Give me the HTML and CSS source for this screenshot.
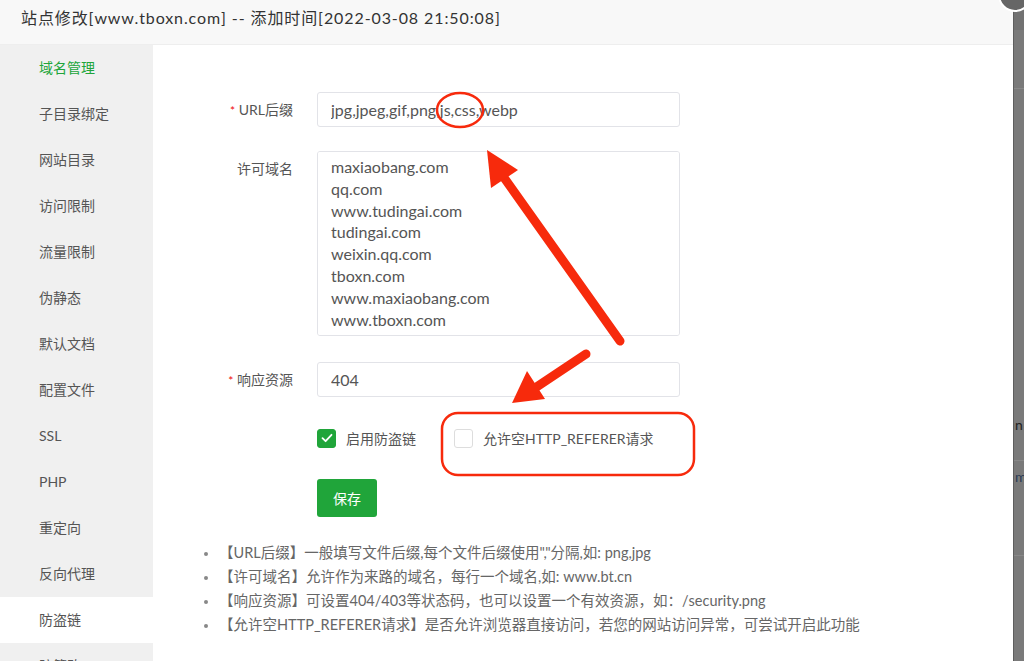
FILE: index.html
```html
<!DOCTYPE html>
<html lang="zh-CN">
<head>
  <meta charset="UTF-8" />
  <meta name="viewport" content="width=device-width, initial-scale=1" />
  <title>站点修改</title>
  <link rel="stylesheet" href="styles.css">
</head>
<body>
  <div class="page">
    <div class="modal">
      <div class="modal-title">站点修改[www.tboxn.com] -- 添加时间[2022-03-08 21:50:08]</div>

      <div class="modal-body">
        <ul class="side-menu">
          <li class="active-green">域名管理</li>
          <li>子目录绑定</li>
          <li>网站目录</li>
          <li>访问限制</li>
          <li>流量限制</li>
          <li>伪静态</li>
          <li>默认文档</li>
          <li>配置文件</li>
          <li>SSL</li>
          <li>PHP</li>
          <li>重定向</li>
          <li>反向代理</li>
          <li class="current">防盗链</li>
          <li>防篡改</li>
        </ul>

        <div class="content">
          <div class="form-row">
            <label class="form-label"><span class="req">*</span> URL后缀</label>
            <input class="form-input" type="text" value="jpg,jpeg,gif,png,js,css,webp" />
          </div>

          <div class="form-row">
            <label class="form-label">许可域名</label>
            <textarea class="form-textarea">maxiaobang.com
qq.com
www.tudingai.com
tudingai.com
weixin.qq.com
tboxn.com
www.maxiaobang.com
www.tboxn.com
tudingai.cn</textarea>
          </div>

          <div class="form-row">
            <label class="form-label"><span class="req">*</span> 响应资源</label>
            <input class="form-input" type="text" value="404" />
          </div>

          <div class="check-row">
            <span class="check-item">
              <span class="checkbox checked">
                <svg width="12" height="10" viewBox="0 0 12 10"><path d="M1.5 5.2 L4.6 8.2 L10.5 1.8" fill="none" stroke="#fff" stroke-width="1.8" stroke-linecap="round" stroke-linejoin="round"/></svg>
              </span>
              启用防盗链
            </span>
            <span class="check-item">
              <span class="checkbox"></span>
              允许空HTTP_REFERER请求
            </span>
          </div>

          <div class="btn-row">
            <button class="btn-save">保存</button>
          </div>

          <ul class="tips">
            <li>【URL后缀】一般填写文件后缀,每个文件后缀使用","分隔,如: png,jpg</li>
            <li>【许可域名】允许作为来路的域名，每行一个域名,如: www.bt.cn</li>
            <li>【响应资源】可设置404/403等状态码，也可以设置一个有效资源，如：/security.png</li>
            <li>【允许空HTTP_REFERER请求】是否允许浏览器直接访问，若您的网站访问异常，可尝试开启此功能</li>
          </ul>
        </div>
      </div>
    </div>

    <div class="backdrop">
      <div class="backdrop-bar"></div>
      <div class="backdrop-line l1"></div>
      <div class="backdrop-line l2"></div>
      <div class="backdrop-line l3"></div>
      <span class="backdrop-text t1">n</span>
      <span class="backdrop-text t2">m</span>
    </div>

    <div class="close-dot"></div>

    <!-- red marks drawn over the screenshot -->
    <svg class="marks" width="1024" height="661" viewBox="0 0 1024 661">
      <ellipse cx="460" cy="110" rx="23" ry="17" fill="none" stroke="#f72a0c" stroke-width="2.5"/>
      <line x1="620" y1="341" x2="500" y2="172" stroke="#f72a0c" stroke-width="9" stroke-linecap="round"/>
      <polygon points="487,150 518,170 491,188" fill="#f72a0c"/>
      <line x1="586" y1="354" x2="532" y2="390" stroke="#f72a0c" stroke-width="9" stroke-linecap="round"/>
      <polygon points="512,403 527,371 545,399" fill="#f72a0c"/>
      <rect x="442" y="413" width="252" height="62" rx="16" fill="none" stroke="#f72a0c" stroke-width="2.5"/>
    </svg>
  </div>
</body>
</html>
```

FILE: styles.css
```css
* {
  box-sizing: border-box;
}

html, body {
  margin: 0;
  padding: 0;
  overflow: hidden;
}

body {
  font-family: 'Lato', 'Noto Sans CJK SC', sans-serif;
  color: #555;
  background-color: #777;
}

.page {
  position: relative;
  display: flex;
  width: 1024px;
  height: 661px;
  overflow: hidden;
}

.modal {
  width: 1013px;
  height: 661px;
  display: flex;
  flex-direction: column;
  background-color: #fff;
}

.modal-title {
  height: 45px;
  padding-left: 21px;
  line-height: 35px;
  font-size: 16px;
  letter-spacing: 0.9px;
  color: #333;
  background-color: #f8f8f8;
  border-bottom: 1px solid #eee;
}

.modal-body {
  flex: 1;
  display: flex;
  min-height: 0;
}

.side-menu {
  width: 153px;
  margin: 0;
  padding: 0;
  list-style: none;
  background-color: #f0f0f0;
}

.side-menu li {
  height: 46px;
  line-height: 46px;
  padding-left: 39px;
  font-size: 14px;
  color: #555;
}

.side-menu li.active-green {
  color: #20a53a;
}

.side-menu li.current {
  background-color: #fff;
}

.content {
  flex: 1;
  padding: 47px 0 0 40px;
}

.form-row {
  display: flex;
  align-items: flex-start;
  margin-bottom: 23px;
}

.form-row:nth-child(2) {
  margin-bottom: 26px;
}

.form-label {
  width: 100px;
  margin-right: 24px;
  text-align: right;
  line-height: 35px;
  font-size: 14px;
  color: #555;
}

.req {
  color: #ef0808;
  font-size: 12px;
}

.form-input,
.form-textarea {
  width: 363px;
  border: 1px solid #e2e3e8;
  border-radius: 3px;
  font-family: 'Lato', 'Noto Sans CJK SC', sans-serif;
  font-size: 16px;
  color: #555;
  outline: none;
}

.form-input {
  height: 35px;
  padding: 0 13px;
}

.form-textarea {
  height: 185px;
  padding: 4px 13px;
  line-height: 21.8px;
  resize: none;
  overflow-y: scroll;
}

.form-textarea::-webkit-scrollbar {
  width: 12px;
}

.form-textarea::-webkit-scrollbar-track {
  background-color: #f0f0f0;
}

.form-textarea::-webkit-scrollbar-thumb {
  background-color: #bbb;
  border-radius: 6px;
}

.check-row {
  display: flex;
  align-items: center;
  height: 40px;
  margin-top: -3px;
  padding-left: 124px;
  font-size: 14px;
  color: #555;
}

.check-item {
  display: flex;
  align-items: center;
  margin-right: 38px;
}

.checkbox {
  width: 19px;
  height: 19px;
  margin-right: 10px;
  border: 1px solid #ddd;
  border-radius: 3px;
  background-color: #fff;
  display: flex;
  align-items: center;
  justify-content: center;
}

.checkbox.checked {
  background-color: #20a53a;
  border-color: #20a53a;
}

.btn-row {
  padding-left: 124px;
  margin-top: 21px;
}

.btn-save {
  display: block;
  width: 60px;
  height: 38px;
  border: none;
  border-radius: 3px;
  background-color: #20a53a;
  color: #fff;
  font-family: 'Lato', 'Noto Sans CJK SC', sans-serif;
  font-size: 14px;
}

.tips {
  margin: 24px 0 0;
  padding-left: 26px;
  font-size: 14.5px;
  line-height: 24px;
  color: #666;
}

.tips li::marker {
  color: #888;
  font-size: 12px;
}

.backdrop {
  position: relative;
  flex: 1;
  background-color: #7a7a7a;
  border-left: 1px solid #5e5e5e;
}

.backdrop-bar {
  height: 30px;
  background-color: #727272;
}

.backdrop-line {
  position: absolute;
  left: 0;
  right: 0;
  height: 1px;
  background-color: #888;
}

.backdrop-line.l1 { top: 88px; }
.backdrop-line.l2 { top: 460px; }
.backdrop-line.l3 { top: 555px; }

.backdrop-text {
  position: absolute;
  left: 1px;
  font-size: 14px;
  color: #222;
}

.backdrop-text.t1 { top: 416px; }
.backdrop-text.t2 { top: 468px; color: #2b3a55; }

.close-dot {
  position: absolute;
  top: -22px;
  right: -8px;
  width: 34px;
  height: 34px;
  border-radius: 50%;
  background-color: #666;
  border: 2px solid #fff;
}

.marks {
  position: absolute;
  top: 0;
  left: 0;
  pointer-events: none;
}
```
